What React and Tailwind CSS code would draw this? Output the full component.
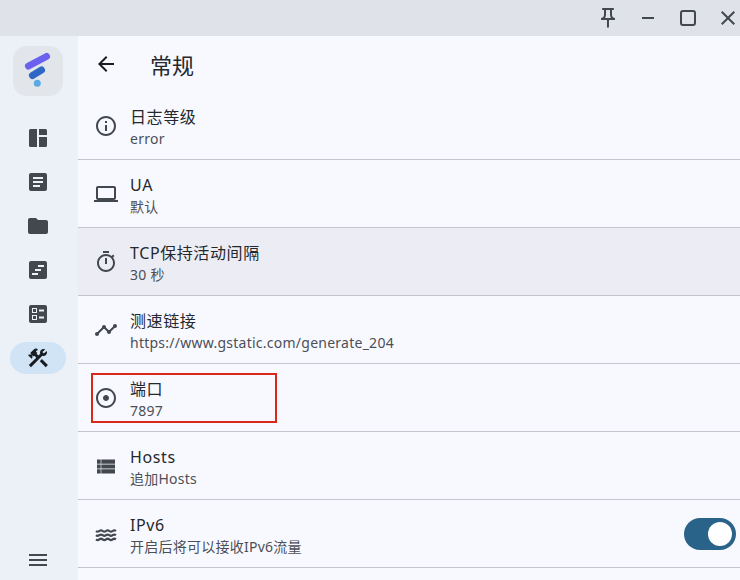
import React from 'react';

const paths = {
  article: 'M19 3H5c-1.1 0-2 .9-2 2v14c0 1.1.9 2 2 2h14c1.1 0 2-.9 2-2V5c0-1.1-.9-2-2-2zm-5 14H7v-2h7v2zm3-4H7v-2h10v2zm0-4H7V7h10v2z',
  folder: 'M10 4H4c-1.1 0-1.99.9-1.99 2L2 18c0 1.1.9 2 2 2h16c1.1 0 2-.9 2-2V8c0-1.1-.9-2-2-2h-8l-2-2z',
  timeline: 'M19 3H5C3.9 3 3 3.9 3 5v14c0 1.1.9 2 2 2h14c1.1 0 2-.9 2-2V5C21 3.9 20.1 3 19 3zM12 17H6v-2h6V17zM15 13H9v-2h6V13zM18 9h-6V7h6V9z',
  ballot: 'M13 9.5h5v-2h-5v2zm0 7h5v-2h-5v2zm6 4.5H5c-1.1 0-2-.9-2-2V5c0-1.1.9-2 2-2h14c1.1 0 2 .9 2 2v14c0 1.1-.9 2-2 2zM6 11h5V6H6v5zm1-4h3v3H7V7zM6 18h5v-5H6v5zm1-4h3v3H7v-3z',
  tools: 'M13.783 15.172l2.121-2.121 5.996 5.996-2.121 2.121zM17.5 10c1.93 0 3.5-1.57 3.5-3.5 0-.58-.16-1.12-.41-1.6l-2.7 2.7-1.49-1.49 2.7-2.7c-.48-.25-1.02-.41-1.6-.41C15.57 3 14 4.57 14 6.5c0 .41.08.8.21 1.16l-1.85 1.85-1.78-1.78.71-.71-1.41-1.41L12 3.49c-1.17-1.17-3.07-1.17-4.24 0L4.22 7.03l1.41 1.41H2.81l-.71.71 3.54 3.54.71-.71V9.15l1.41 1.41.71-.71 1.78 1.78-7.41 7.41 2.12 2.12L16.34 9.79c.36.13.75.21 1.16.21z',
  menu: 'M3 18h18v-2H3v2zm0-5h18v-2H3v2zm0-7v2h18V6H3z',
  back: 'M20 11H7.83l5.59-5.59L12 4l-8 8 8 8 1.41-1.41L7.83 13H20v-2z',
  info: 'M11 7h2v2h-2zm0 4h2v6h-2zm1-9C6.48 2 2 6.48 2 12s4.48 10 10 10 10-4.48 10-10S17.52 2 12 2zm0 18c-4.41 0-8-3.59-8-8s3.59-8 8-8 8 3.59 8 8-3.59 8-8 8z',
  laptop: 'M20 18c1.1 0 1.99-.9 1.99-2L22 6c0-1.1-.9-2-2-2H4c-1.1 0-2 .9-2 2v10c0 1.1.9 2 2 2H0v2h24v-2h-4zM4 6h16v10H4V6z',
  timer: 'M9 1h6v2H9zm2 7h2v6h-2zm8.03-.61l1.42-1.42c-.43-.51-.9-.99-1.41-1.41l-1.42 1.42C16.07 4.74 14.12 4 12 4c-4.97 0-9 4.03-9 9s4.02 9 9 9 9-4.03 9-9c0-2.12-.74-4.07-1.97-5.61zM12 20c-3.87 0-7-3.13-7-7s3.13-7 7-7 7 3.13 7 7-3.13 7-7 7z',
  chart: 'M23 8c0 1.1-.9 2-2 2-.18 0-.35-.02-.51-.07l-3.56 3.55c.05.16.07.34.07.52 0 1.1-.9 2-2 2s-2-.9-2-2c0-.18.02-.36.07-.52l-2.55-2.55c-.16.05-.34.07-.52.07s-.36-.02-.52-.07l-4.55 4.56c.05.16.07.33.07.51 0 1.1-.9 2-2 2s-2-.9-2-2 .9-2 2-2c.18 0 .35.02.51.07l4.56-4.55C8.02 9.36 8 9.18 8 9c0-1.1.9-2 2-2s2 .9 2 2c0 .18-.02.36-.07.52l2.55 2.55c.16-.05.34-.07.52-.07s.36.02.52.07l3.55-3.56C19.02 8.35 19 8.18 19 8c0-1.1.9-2 2-2s2 .9 2 2z',
  adjust: 'M12 2C6.48 2 2 6.48 2 12s4.48 10 10 10 10-4.48 10-10S17.52 2 12 2zm0 18c-4.42 0-8-3.58-8-8s3.58-8 8-8 8 3.58 8 8-3.58 8-8 8zm0-11c-1.66 0-3 1.34-3 3s1.34 3 3 3 3-1.34 3-3-1.34-3-3-3z',
  list: 'M3 5.500h3.700v4.300H3zM7.300 5.500H21v4.300H7.300zM3 10.400h3.700v4.200H3zM7.300 10.400H21v4.200H7.300zM3 15.200h3.700v4.300H3zM7.300 15.200H21v4.300H7.300z',
  pin: 'M14 4v5c0 1.12.37 2.16 1 3H9c.65-.86 1-1.9 1-3V4h4m3-2H7c-.55 0-1 .45-1 1s.45 1 1 1h1v5c0 1.66-1.34 3-3 3v2h5.970v7l1 1 1-1v-7H19v-2c-1.66 0-3-1.34-3-3V4h1c.55 0 1-.45 1-1s-.45-1-1-1z',
  minus: 'M6 11h12v2H6z',
  square: 'M7 4h10a3 3 0 0 1 3 3v10a3 3 0 0 1-3 3H7a3 3 0 0 1-3-3V7a3 3 0 0 1 3-3zm0 2a1 1 0 0 0-1 1v10a1 1 0 0 0 1 1h10a1 1 0 0 0 1-1V7a1 1 0 0 0-1-1z',
  close: 'M19 6.41L17.59 5 12 10.59 6.41 5 5 6.41 10.59 12 5 17.59 6.41 19 12 13.41 17.59 19 19 17.59 13.41 12z',
};

function Icon({ name, className = 'w-6 h-6 text-[#43474e]' }) {
  return (
    <svg viewBox="0 0 24 24" fill="currentColor" className={className}>
      <path d={paths[name]} />
    </svg>
  );
}

function DashboardIcon() {
  return (
    <svg viewBox="0 0 24 24" fill="currentColor" className="w-6 h-6 text-[#43474e]">
      <path d="M4.500 3H11v18H4.500A1.500 1.500 0 0 1 3 19.500v-15A1.500 1.500 0 0 1 4.500 3zM13 3h6.500A1.500 1.500 0 0 1 21 4.500V9h-8zM13 11h8v8.500a1.500 1.500 0 0 1-1.500 1.500H13z" />
    </svg>
  );
}

function WavesIcon() {
  return (
    <svg viewBox="0 0 24 24" fill="none" stroke="currentColor" strokeWidth="2.200" className="w-6 h-6 text-[#43474e]">
      <path d="M2 9q1.670 1.300 3.330 0t3.330 0 3.330 0 3.330 0 3.330 0 3.330 0" />
      <path d="M2 13.200q1.670 1.300 3.330 0t3.330 0 3.330 0 3.330 0 3.330 0 3.330 0" />
      <path d="M2 17.400q1.670 1.300 3.330 0t3.330 0 3.330 0 3.330 0 3.330 0 3.330 0" />
    </svg>
  );
}

function Logo() {
  return (
    <svg viewBox="0 0 50 50" className="w-[50px] h-[50px]">
      <line x1="15.500" y1="20" x2="33.500" y2="10.500" stroke="#6a62ee" strokeWidth="7" strokeLinecap="round" />
      <line x1="19.500" y1="29.500" x2="28.500" y2="24" stroke="#2e68c4" strokeWidth="7" strokeLinecap="round" />
      <circle cx="24.300" cy="37.300" r="3.500" fill="#5aa9e6" />
    </svg>
  );
}

const navItems = ['timeline', 'ballot'];

const rows = [
  { icon: <Icon name="info" />, title: '日志等级', sub: 'error' },
  { icon: <Icon name="laptop" />, title: 'UA', sub: '默认' },
  { icon: <Icon name="timer" />, title: 'TCP保持活动间隔', sub: '30 秒', active: true },
  { icon: <Icon name="chart" />, title: '测速链接', sub: 'https://www.gstatic.com/generate_204' },
  { icon: <Icon name="adjust" />, title: '端口', sub: '7897', marked: true },
  { icon: <Icon name="list" />, title: 'Hosts', sub: '追加Hosts' },
  { icon: <WavesIcon />, title: 'IPv6', sub: '开启后将可以接收IPv6流量', toggle: true },
];

function Row({ icon, title, sub, active, marked, toggle }) {
  return (
    <div className={`relative h-[68px] shrink-0 flex items-center pl-4 pr-1 gap-3 border-b border-[#c4c6cf] ${active ? 'bg-[#ecedf4]' : ''}`}>
      {icon}
      <div className="flex-1 min-w-0 pt-[2px]">
        <div className="text-base leading-6 tracking-[0.6px] text-[#25282d]">{title}</div>
        <div className="text-sm leading-[20px] tracking-[0.25px] text-[#4b4f56]">{sub}</div>
      </div>
      {toggle && (
        <div className="w-[52px] h-8 rounded-full bg-[#2a6389] flex items-center justify-end pr-1">
          <div className="w-6 h-6 rounded-full bg-white" />
        </div>
      )}
      {marked && <div className="absolute left-[13px] top-[9px] w-[186px] h-[50px] border-2 border-[#d9291c]" />}
    </div>
  );
}

export default function App() {
  return (
    <div className="w-[740px] h-[580px] overflow-hidden flex flex-col bg-[#f8f9ff] font-['Noto_Sans','Noto_Sans_CJK_SC',sans-serif]">
      <div className="h-9 shrink-0 flex items-center justify-end gap-4 bg-[#dfe2e9]">
        <Icon name="pin" className="w-6 h-6 text-[#43474e]" />
        <Icon name="minus" className="w-6 h-6 text-[#43474e]" />
        <Icon name="square" className="w-6 h-6 text-[#43474e]" />
        <Icon name="close" className="w-6 h-6 text-[#43474e]" />
      </div>
      <div className="flex-1 flex min-h-0">
        <div className="w-[78px] shrink-0 flex flex-col items-center bg-[#ecf0f7] pt-[10px] pb-1 pr-[2px]">
          <div className="w-[50px] h-[50px] rounded-[14px] bg-[#e2e5e9] mb-[26px]">
            <Logo />
          </div>
          <div className="flex flex-col gap-3 items-center flex-1">
            <div className="h-8 w-14 flex items-center justify-center"><DashboardIcon /></div>
            <div className="h-8 w-14 flex items-center justify-center"><Icon name="article" /></div>
            <div className="h-8 w-14 flex items-center justify-center"><Icon name="folder" /></div>
            {navItems.map((n) => (
              <div key={n} className="h-8 w-14 flex items-center justify-center"><Icon name={n} /></div>
            ))}
            <div className="h-8 w-14 rounded-full bg-[#d0e4f6] flex items-center justify-center">
              <Icon name="tools" className="w-6 h-6 text-[#191c20]" />
            </div>
          </div>
          <div className="h-8 w-14 flex items-center justify-center"><Icon name="menu" /></div>
        </div>
        <div className="flex-1 min-w-0 flex flex-col">
          <div className="h-14 shrink-0 flex items-center pl-4 text-[#191c20]">
            <Icon name="back" className="w-6 h-6 text-[#191c20]" />
            <span className="ml-8 pt-[2px] text-[22px] text-[#25282d]">常规</span>
          </div>
          {rows.map((r) => (
            <Row key={r.title} {...r} />
          ))}
        </div>
      </div>
    </div>
  );
}
